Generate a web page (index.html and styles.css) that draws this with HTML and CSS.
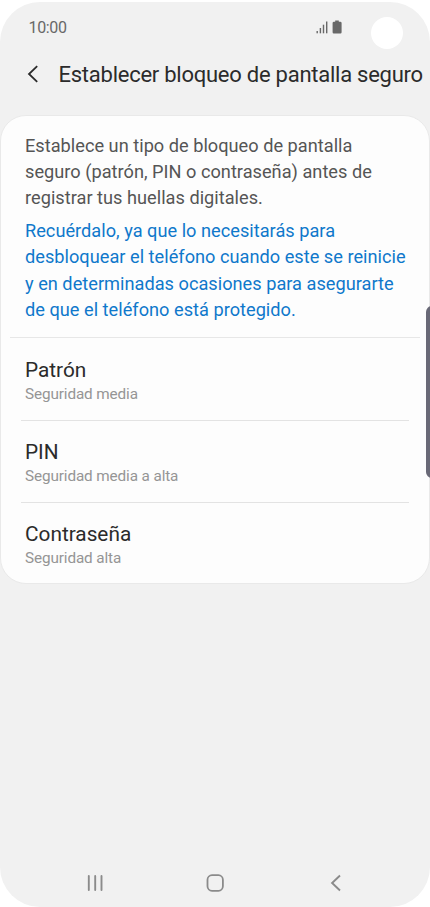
FILE: index.html
```html
<!DOCTYPE html>
<html lang="es">
<head>
<meta charset="utf-8">
<title>Establecer bloqueo de pantalla seguro</title>
<link rel="stylesheet" href="styles.css">
</head>
<body>
<div class="phone">
  <header class="status">
    <span class="clock">10:00</span>
    <svg class="status-icons" width="28" height="16" viewBox="0 0 28 16">
      <g fill="#686868">
        <rect x="0.5" y="11" width="1.4" height="2.3"/>
        <rect x="3.7" y="8" width="1.4" height="5.3"/>
        <rect x="6.8" y="4.7" width="1.4" height="8.6"/>
        <rect x="10" y="1.5" width="1.4" height="11.8"/>
        <path d="M19.2 0.5h3.6v1.2h1.4q1.4 0 1.4 1.2v9.3q0 1.2-1.2 1.2h-6.6q-1.2 0-1.2-1.2v-9.3q0-1.2 1.4-1.2h1.2z"/>
      </g>
    </svg>
    <span class="camera"></span>
  </header>
  <div class="titlebar">
    <svg class="back" width="12" height="18" viewBox="0 0 12 18" fill="none" stroke="#2b2b2b" stroke-width="1.8"><path d="M10.2 1.2L2 9l8.2 7.8"/></svg>
    <h1>Establecer bloqueo de pantalla seguro</h1>
  </div>
  <main class="card">
    <section class="intro">
      <p>Establece un tipo de bloqueo de pantalla<br>seguro (patrón, PIN o contraseña) antes de<br>registrar tus huellas digitales.</p>
      <p class="note">Recuérdalo, ya que lo necesitarás para<br>desbloquear el teléfono cuando este se reinicie<br>y en determinadas ocasiones para asegurarte<br>de que el teléfono está protegido.</p>
    </section>
    <ul class="options">
      <li><strong>Patrón</strong><span>Seguridad media</span></li>
      <li><strong>PIN</strong><span>Seguridad media a alta</span></li>
      <li><strong>Contraseña</strong><span>Seguridad alta</span></li>
    </ul>
  </main>
  <nav class="nav">
    <svg width="18" height="18" viewBox="0 0 18 18" stroke="#8b8b8b" stroke-width="1.9" stroke-linecap="round"><path d="M2.8 2v14M9.2 2v14M15.5 2v14"/></svg>
    <svg width="18" height="18" viewBox="0 0 18 18" fill="none" stroke="#8b8b8b" stroke-width="1.8"><rect x="1.5" y="1.2" width="15.4" height="15.6" rx="4.5"/></svg>
    <svg width="18" height="18" viewBox="0 0 18 18" fill="none" stroke="#8b8b8b" stroke-width="1.9"><path d="M14 1.5L6.1 9l7.9 7.5"/></svg>
  </nav>
  <span class="edge-handle"></span>
</div>
</body>
</html>
```

FILE: styles.css
```css
* { box-sizing: border-box; }
body {
  margin: 0;
  height: 907px;
  padding-top: 2px;
  background: #fff;
  font-family: Roboto, sans-serif;
  overflow: hidden;
}
.phone {
  position: relative;
  display: flex;
  flex-direction: column;
  height: 905px;
  background: #f1f1f1;
  border-radius: 40px;
  overflow: hidden;
}
.status {
  display: flex;
  height: 50px;
  padding-left: 28.5px;
}
.clock {
  width: 287.5px;
  padding-top: 16px;
  font-size: 16px;
  letter-spacing: -0.35px;
  line-height: 20px;
  color: #686868;
}
.status-icons { margin-top: 18px; }
.camera {
  width: 32px;
  height: 32px;
  margin: 15px 0 0 26.5px;
  border-radius: 50%;
  background: #fff;
}
.titlebar {
  display: flex;
  align-items: center;
  height: 46px;
  padding-left: 27px;
}
.back { flex: none; margin-right: 19.5px; margin-top: -3px; }
h1 {
  margin: 0;
  font-size: 22px;
  font-weight: 400;
  letter-spacing: -0.25px;
  line-height: 46px;
  white-space: nowrap;
  color: #2b2b2b;
}
.card {
  height: 469px;
  margin-top: 17px;
  border: 1px solid #e9e9e9;
  border-radius: 26px;
  background: #fdfdfd;
}
.intro {
  height: 222px;
  margin: 0 9px;
  padding: 16.8px 0 0 15px;
  border-bottom: 1px solid #e7e7e7;
  font-size: 18.2px;
  letter-spacing: 0.01px;
  line-height: 26.2px;
  color: #555;
  white-space: nowrap;
}
.intro p { margin: 0; }
.intro .note { margin-top: 6.8px; color: #0f78cb; }
.options {
  margin: 0 20px;
  padding: 0;
  list-style: none;
}
.options li {
  display: flex;
  flex-direction: column;
  height: 82px;
  padding: 18px 0 0 4px;
  border-bottom: 1px solid #e3e3e3;
}
.options li:first-child { height: 83px; padding-top: 19px; }
.options li:last-child { border: 0; }
.options strong {
  font-size: 20.8px;
  font-weight: 400;
  line-height: 26px;
  color: #2b2b2b;
}
.options span {
  font-size: 15.3px;
  letter-spacing: -0.12px;
  line-height: 22px;
  color: #959595;
}
.nav {
  display: flex;
  justify-content: space-between;
  margin-top: auto;
  padding: 0 86px 15px;
}
.edge-handle {
  position: absolute;
  top: 304px;
  right: -8px;
  width: 12px;
  height: 172px;
  border-radius: 6px;
  background: #696977;
}
```
